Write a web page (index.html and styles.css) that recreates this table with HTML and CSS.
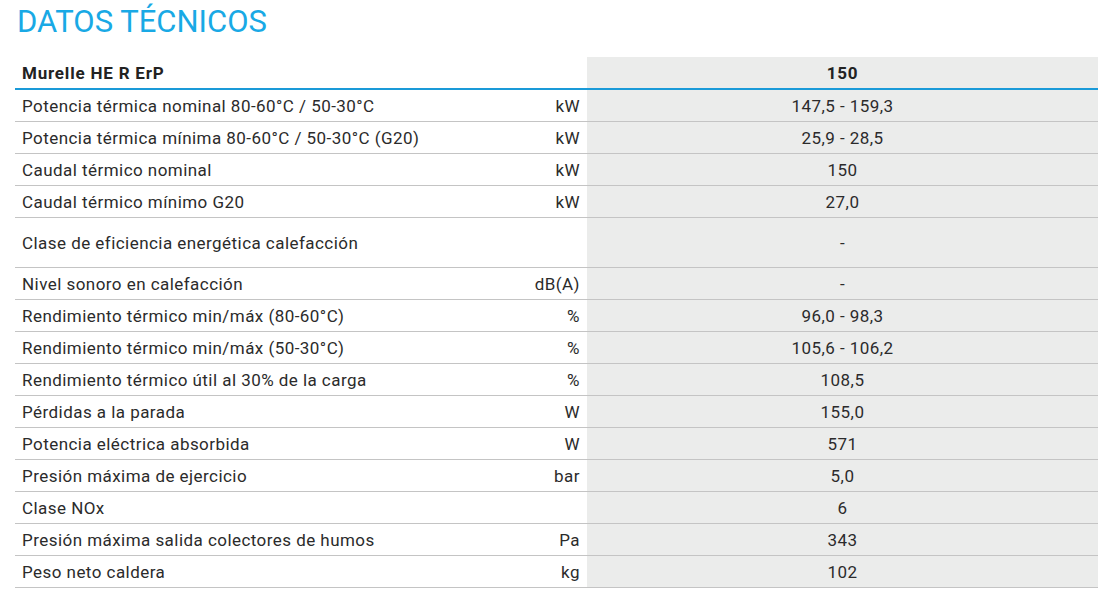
FILE: index.html
```html
<!DOCTYPE html>
<html lang="es">
<head>
<meta charset="utf-8">
<title>Datos técnicos</title>
<link rel="stylesheet" href="styles.css">
</head>
<body>
<div class="page">
  <h1 class="title">DATOS TÉCNICOS</h1>
  <table class="specs">
    <thead>
      <tr>
        <th class="label">Murelle HE R ErP</th>
        <th class="unit"></th>
        <th class="value">150</th>
      </tr>
    </thead>
    <tbody>
      <tr><td class="label">Potencia térmica nominal 80-60°C / 50-30°C</td><td class="unit">kW</td><td class="value">147,5 - 159,3</td></tr>
      <tr><td class="label">Potencia térmica mínima 80-60°C / 50-30°C (G20)</td><td class="unit">kW</td><td class="value">25,9 - 28,5</td></tr>
      <tr><td class="label">Caudal térmico nominal</td><td class="unit">kW</td><td class="value">150</td></tr>
      <tr><td class="label">Caudal térmico mínimo G20</td><td class="unit">kW</td><td class="value">27,0</td></tr>
      <tr class="tall"><td class="label">Clase de eficiencia energética calefacción</td><td class="unit"></td><td class="value">-</td></tr>
      <tr><td class="label">Nivel sonoro en calefacción</td><td class="unit">dB(A)</td><td class="value">-</td></tr>
      <tr><td class="label">Rendimiento térmico min/máx (80-60°C)</td><td class="unit">%</td><td class="value">96,0 - 98,3</td></tr>
      <tr><td class="label">Rendimiento térmico min/máx (50-30°C)</td><td class="unit">%</td><td class="value">105,6 - 106,2</td></tr>
      <tr><td class="label">Rendimiento térmico útil al 30% de la carga</td><td class="unit">%</td><td class="value">108,5</td></tr>
      <tr><td class="label">Pérdidas a la parada</td><td class="unit">W</td><td class="value">155,0</td></tr>
      <tr><td class="label">Potencia eléctrica absorbida</td><td class="unit">W</td><td class="value">571</td></tr>
      <tr><td class="label">Presión máxima de ejercicio</td><td class="unit">bar</td><td class="value">5,0</td></tr>
      <tr><td class="label">Clase NOx</td><td class="unit"></td><td class="value">6</td></tr>
      <tr><td class="label">Presión máxima salida colectores de humos</td><td class="unit">Pa</td><td class="value">343</td></tr>
      <tr><td class="label">Peso neto caldera</td><td class="unit">kg</td><td class="value">102</td></tr>
    </tbody>
  </table>
</div>
</body>
</html>
```

FILE: styles.css
```css
html, body {
  margin: 0;
  padding: 0;
  background: #ffffff;
}

body {
  font-family: Roboto, "Liberation Sans", sans-serif;
  color: #2b2b2b;
}

.page {
  padding: 0 14px 0 15px;
}

.title {
  margin: 0;
  padding: 4px 0 0 2px;
  height: 57px;
  box-sizing: border-box;
  font-size: 31px;
  font-weight: 400;
  line-height: 36px;
  color: #19a9e5;
  letter-spacing: 0;
}

.specs {
  width: 1083px;
  border-collapse: collapse;
  table-layout: fixed;
  font-size: 17px;
  letter-spacing: 0.45px;
}

.specs th,
.specs td {
  padding: 0 7px;
  height: 31px;
  vertical-align: middle;
  border-bottom: 1px solid #c4c4c4;
  white-space: nowrap;
}

.specs thead th {
  height: 31px;
  border-bottom: 2px solid #1a9ad8;
  font-weight: 700;
  font-size: 17px;
  letter-spacing: 0.8px;
  color: #222222;
}

.specs .label {
  width: 464px;
  text-align: left;
}

.specs .unit {
  width: 80px;
  text-align: right;
}

.specs .value {
  text-align: center;
  background: #ebeceb;
}

.specs tr.tall td {
  height: 49px;
}
```
